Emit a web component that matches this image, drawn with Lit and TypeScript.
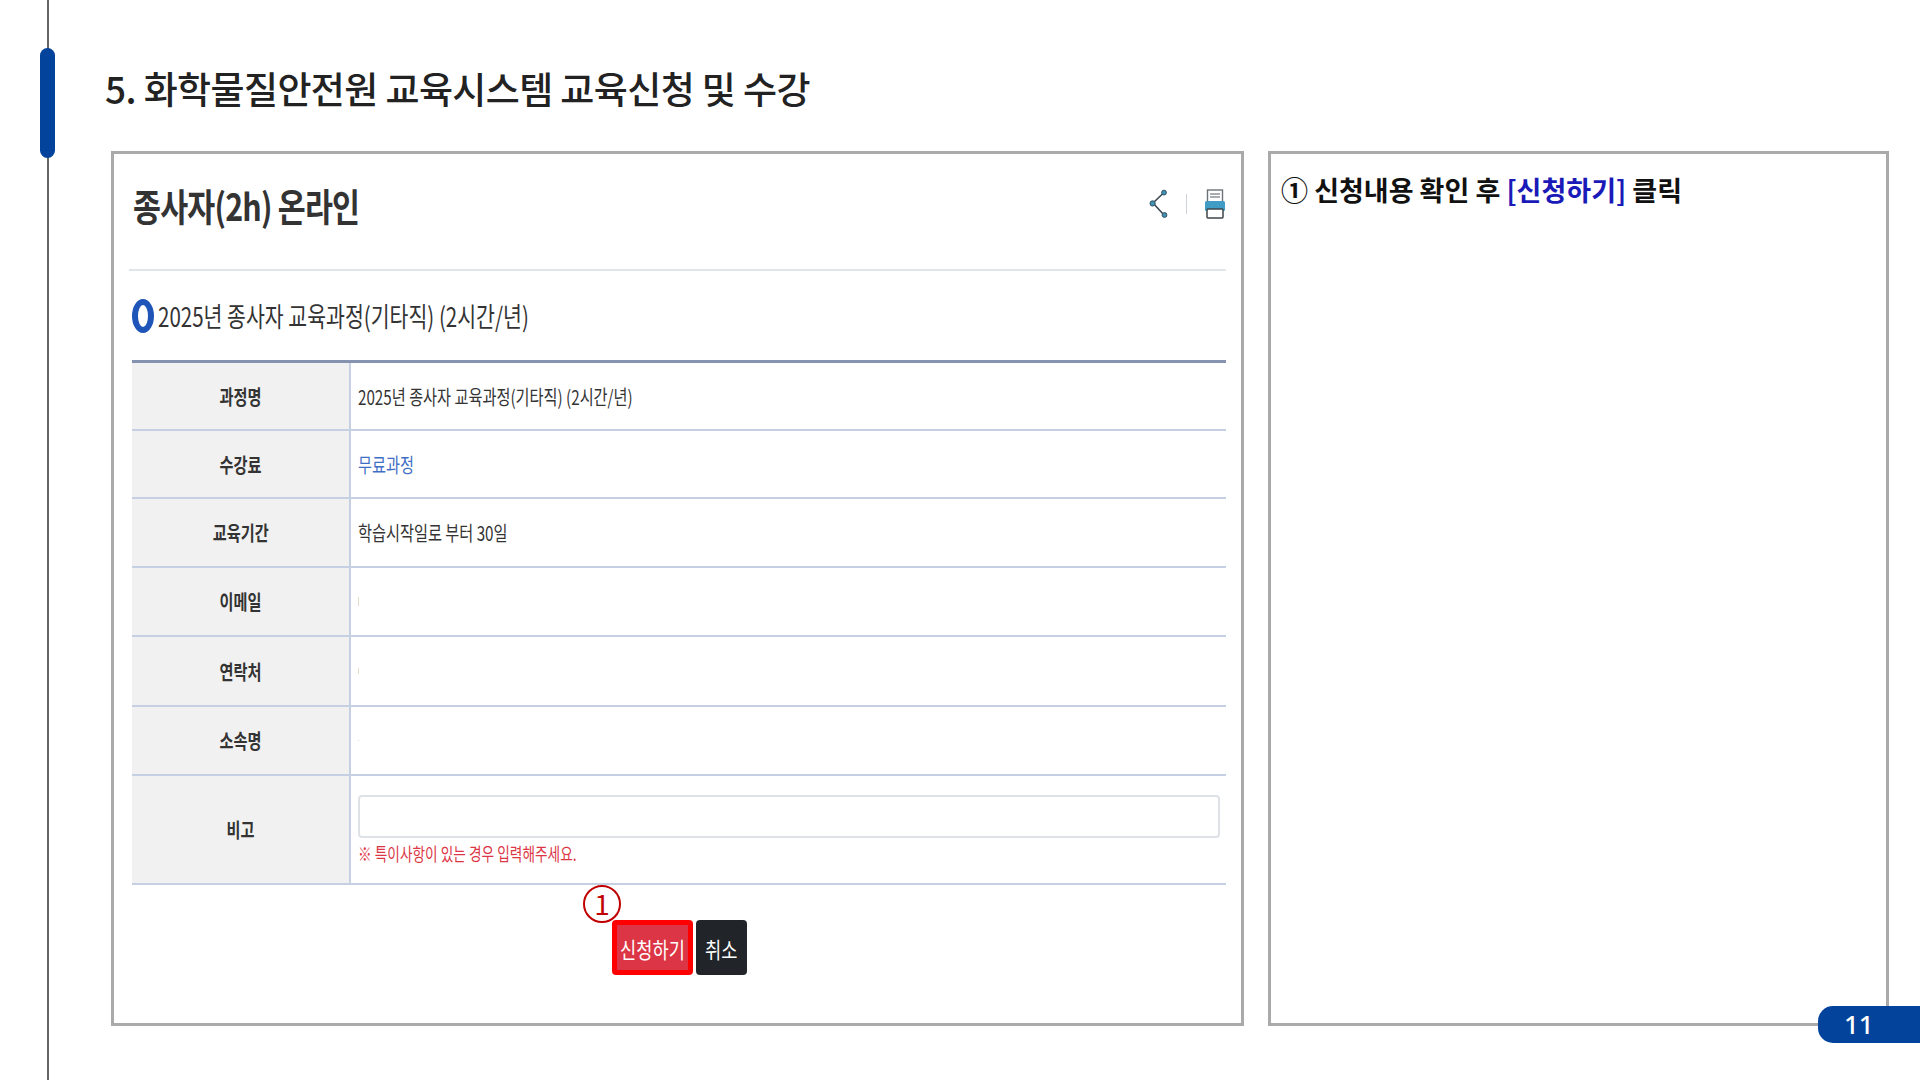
import { LitElement, html, css, nothing } from 'lit';
import { customElement } from 'lit/decorators.js';

interface Row {
  label: string;
  value?: string;
  link?: boolean;
  mark?: number;
}

const ROWS: Row[] = [
  { label: '과정명', value: '2025년 종사자 교육과정(기타직) (2시간/년)' },
  { label: '수강료', value: '무료과정', link: true },
  { label: '교육기간', value: '학습시작일로 부터 30일' },
  { label: '이메일', mark: 9 },
  { label: '연락처', mark: 6 },
  { label: '소속명', mark: 1 },
];

@customElement('app-root')
export class AppRoot extends LitElement {
  static styles = css`
    :host {
      display: block;
      width: 1920px;
      height: 1080px;
      background: #fff;
      font-family: 'Noto Sans CJK KR', 'Noto Sans', sans-serif;
      color: #222;
      overflow: hidden;
      position: relative;
    }

    .slide {
      display: flex;
      height: 100%;
    }

    .rail {
      position: relative;
      flex: none;
      width: 2px;
      margin-left: 47px;
      background: #666;
    }

    .rail-pill {
      position: absolute;
      left: -7px;
      top: 48px;
      width: 15px;
      height: 110px;
      border-radius: 8px;
      background: #03439c;
    }

    .main {
      flex: 1;
      padding: 60px 0 0 56px;
    }

    .title {
      height: 56px;
      margin: 0;
      font-size: 37px;
      font-weight: 500;
      line-height: 56px;
      color: #222;
      letter-spacing: -0.6px;
      white-space: nowrap;
    }

    .panels {
      display: flex;
      gap: 24px;
      height: 875px;
      margin: 35px 0 0 6px;
    }

    .panel {
      box-sizing: border-box;
      border: 3px solid #aaa;
      background: #fff;
    }

    .panel.form {
      width: 1133px;
      padding: 0 15px 0 18px;
    }

    .panel.help {
      width: 621px;
      padding: 16px 0 0 10px;
    }

    .squeeze {
      display: inline-block;
      transform-origin: left center;
      white-space: nowrap;
    }

    .head {
      box-sizing: border-box;
      display: flex;
      align-items: center;
      justify-content: space-between;
      height: 117px;
      padding-bottom: 15px;
      margin-left: -3px;
      border-bottom: 2px solid #e1e5ea;
    }

    .head-title {
      margin-left: 4px;
      font-size: 38px;
      font-weight: 700;
      color: #333;
      letter-spacing: -1px;
      transform: scaleX(0.8);
    }

    .head-tools {
      display: flex;
      align-items: center;
      gap: 17px;
    }

    .tool-sep {
      width: 1px;
      height: 20px;
      background: #cfd4da;
    }

    .section {
      display: flex;
      align-items: center;
      gap: 4px;
      height: 89px;
      padding-top: 0;
      box-sizing: border-box;
    }

    .section-dot {
      flex: none;
      box-sizing: border-box;
      width: 22px;
      height: 34px;
      border: 6px solid #1f55b8;
      border-radius: 50%;
    }

    .section-text {
      font-size: 27px;
      color: #333;
      transform: scaleX(0.76);
    }

    .table {
      display: grid;
      grid-template-columns: 219px 1fr;
      grid-template-rows: 68px 68px 69px 69px 70px 69px 109px;
      border-top: 3px solid #8592b0;
    }

    .cell-label,
    .cell-value {
      box-sizing: border-box;
      display: flex;
      align-items: center;
      border-bottom: 2px solid #c5d0e3;
      font-size: 20px;
    }

    .cell-label {
      justify-content: center;
      background: #f1f1f1;
      border-right: 2px solid #c5d0e3;
      font-weight: 700;
      color: #333;
    }

    .cell-label span {
      display: inline-block;
      transform: scaleX(0.76);
      white-space: nowrap;
    }

    .cell-value {
      padding-left: 7px;
      color: #333;
    }

    .cell-value .squeeze {
      transform: scaleX(0.76);
    }

    .cell-value.link {
      color: #3f6fc4;
    }

    .mark {
      width: 1px;
      background: #e6dccb;
    }

    .cell-note {
      flex-direction: column;
      align-items: stretch;
      padding: 19px 6px 0 7px;
    }

    .note-box {
      box-sizing: border-box;
      height: 43px;
      border: 2px solid #dee2e6;
      border-radius: 4px;
    }

    .note-text {
      margin-top: 2px;
      font-size: 18px;
      line-height: 26px;
      color: #dc3545;
      transform: scaleX(0.76);
    }

    .actions {
      position: relative;
      display: flex;
      gap: 3px;
      margin-top: 35px;
      padding-left: 480px;
    }

    .btn {
      box-sizing: border-box;
      display: flex;
      align-items: center;
      justify-content: center;
      height: 55px;
      border-radius: 4px;
      color: #fff;
      font-size: 22px;
    }

    .btn span {
      display: inline-block;
      transform: scaleX(0.8);
      white-space: nowrap;
    }

    .btn.apply {
      width: 81px;
      border: 5px solid #f00;
      background: #dc3545;
    }

    .btn.cancel {
      width: 51px;
      background: #212529;
    }

    .callout {
      position: absolute;
      left: 451px;
      top: -35px;
      box-sizing: border-box;
      width: 38px;
      height: 38px;
      border: 2px solid #c00000;
      border-radius: 50%;
      background: #fff;
      color: #c00000;
      font-size: 28px;
      line-height: 33px;
      text-align: center;
    }

    .help-text {
      margin: 0;
      font-size: 27px;
      font-weight: 700;
      line-height: 40px;
      color: #111;
      white-space: nowrap;
    }

    .help-text em {
      font-style: normal;
      color: #1a1ab8;
    }

    .page-no {
      position: absolute;
      right: -20px;
      top: 1006px;
      width: 122px;
      height: 37px;
      box-sizing: border-box;
      padding-left: 26px;
      border-radius: 15px;
      background: #03439c;
      color: #fff;
      font-size: 26px;
      font-weight: 500;
      line-height: 37px;
      font-family: 'Noto Sans', sans-serif;
    }
  `;

  private shareIcon() {
    return html`<svg width="20" height="30" viewBox="0 0 20 30" fill="none">
      <path d="M14.5 4 L4 14 L15 26" stroke="#3d4a55" stroke-width="1.6" />
      <circle cx="15" cy="3.6" r="2.4" fill="#3f93b5" stroke="#33505f" />
      <circle cx="3.6" cy="14.4" r="2.6" fill="#3f93b5" stroke="#33505f" />
      <circle cx="15.5" cy="26" r="2.4" fill="#3f93b5" stroke="#33505f" />
    </svg>`;
  }

  private printIcon() {
    return html`<svg width="22" height="30" viewBox="0 0 22 30" fill="none">
      <rect x="3.5" y="1" width="15" height="12" fill="#fff" stroke="#6b7378" stroke-width="1.4" />
      <path d="M6 5h10M6 8h10" stroke="#8a9298" stroke-width="1.3" />
      <rect x="1" y="12" width="20" height="10" rx="1.5" fill="#3f9cc4" />
      <rect x="3" y="20" width="16" height="9" rx="1" fill="#fff" stroke="#3d4448" stroke-width="1.5" />
    </svg>`;
  }

  private renderRow(row: Row) {
    return html`
      <div class="cell-label"><span>${row.label}</span></div>
      <div class="cell-value ${row.link ? 'link' : ''}">
        ${row.value ? html`<span class="squeeze">${row.value}</span>` : nothing}
        ${row.mark ? html`<div class="mark" style="height:${row.mark}px"></div>` : nothing}
      </div>
    `;
  }

  render() {
    return html`
      <div class="slide">
        <div class="rail"><div class="rail-pill"></div></div>
        <div class="main">
          <h1 class="title">5. 화학물질안전원 교육시스템 교육신청 및 수강</h1>
          <div class="panels">
            <section class="panel form">
              <div class="head">
                <span class="head-title squeeze">종사자(2h) 온라인</span>
                <div class="head-tools">
                  ${this.shareIcon()}
                  <div class="tool-sep"></div>
                  ${this.printIcon()}
                </div>
              </div>
              <div class="section">
                <div class="section-dot"></div>
                <span class="section-text squeeze">2025년 종사자 교육과정(기타직) (2시간/년)</span>
              </div>
              <div class="table">
                ${ROWS.map((row) => this.renderRow(row))}
                <div class="cell-label"><span>비고</span></div>
                <div class="cell-value cell-note">
                  <div class="note-box"></div>
                  <div class="note-text squeeze">※ 특이사항이 있는 경우 입력해주세요.</div>
                </div>
              </div>
              <div class="actions">
                <div class="callout">1</div>
                <div class="btn apply"><span>신청하기</span></div>
                <div class="btn cancel"><span>취소</span></div>
              </div>
            </section>
            <section class="panel help">
              <p class="help-text">① 신청내용 확인 후 <em>[신청하기]</em> 클릭</p>
            </section>
          </div>
        </div>
      </div>
      <div class="page-no">11</div>
    `;
  }
}
